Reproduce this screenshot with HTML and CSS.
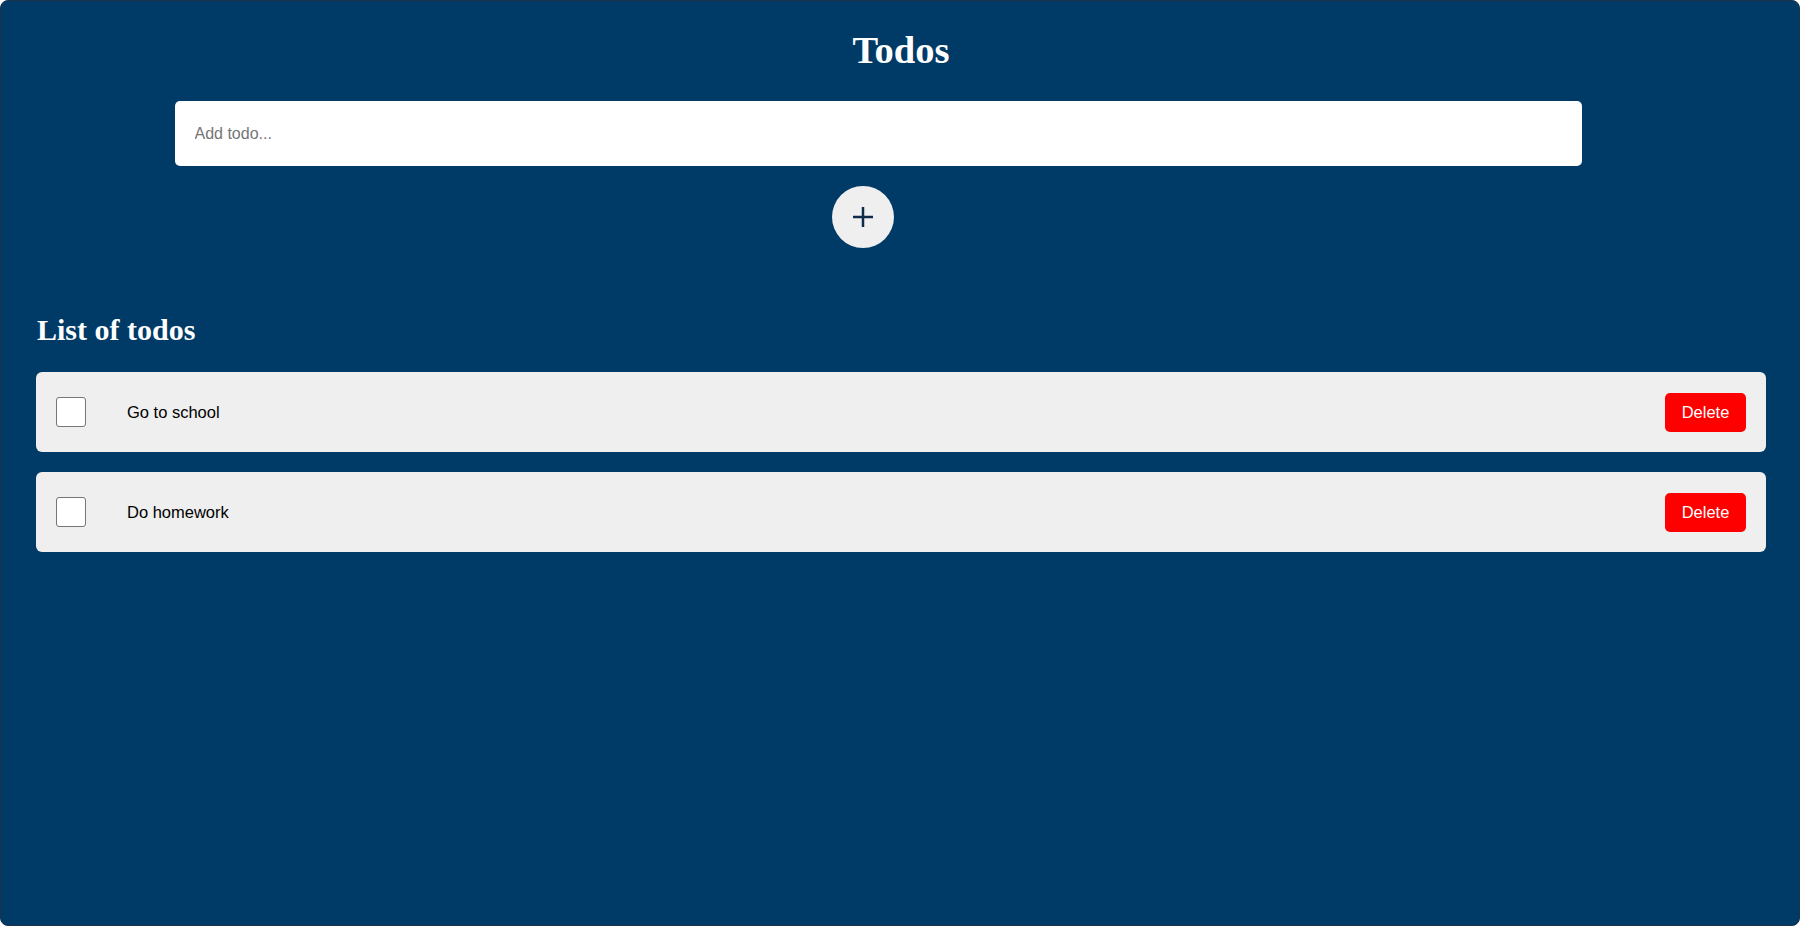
FILE: index.html
```html
<!DOCTYPE html>
<html lang="en">
<head>
<meta charset="utf-8">
<title>Todos</title>
<link rel="stylesheet" href="styles.css">
</head>
<body>
<div class="app">
  <h1 class="title">Todos</h1>
  <form class="add-form">
    <input class="add-input" type="text" placeholder="Add todo...">
    <button class="add-btn" type="button" aria-label="Add">
      <svg width="22" height="22" viewBox="0 0 22 22"><path d="M11 1v20M1 11h20" stroke="#0d2b4b" stroke-width="2.5" fill="none"/></svg>
    </button>
  </form>
  <h2 class="list-title">List of todos</h2>
  <ul class="todo-list">
    <li class="todo">
      <input class="todo-check" type="checkbox">
      <span class="todo-text">Go to school</span>
      <button class="todo-delete" type="button">Delete</button>
    </li>
    <li class="todo">
      <input class="todo-check" type="checkbox">
      <span class="todo-text">Do homework</span>
      <button class="todo-delete" type="button">Delete</button>
    </li>
  </ul>
</div>
</body>
</html>
```
FILE: styles.css
```css
html, body {
  margin: 0;
  padding: 0;
  background: #ffffff;
}
.app {
  box-sizing: border-box;
  height: 926px;
  background: #003a66;
  border: 1px solid #1d3149;
  border-radius: 8px;
  padding: 27px 33px 0 35px;
  font-family: "Liberation Sans", Arial, sans-serif;
}
.title {
  margin: 0;
  text-align: center;
  color: #ffffff;
  font-family: "Liberation Serif", "Times New Roman", serif;
  font-weight: bold;
  font-size: 38.5px;
  line-height: normal;
}
.add-form {
  display: flex;
  flex-direction: column;
  align-items: center;
  margin: 29px 0 0;
}
.add-input {
  box-sizing: border-box;
  width: 1407px;
  height: 65px;
  margin-right: 46px;
  border: none;
  border-radius: 5px;
  padding: 0 20px;
  background: #ffffff;
  font-family: "Liberation Sans", Arial, sans-serif;
  font-size: 16px;
  color: #222;
  outline: none;
}
.add-input::placeholder {
  color: #757575;
}
.add-btn {
  box-sizing: border-box;
  width: 62px;
  height: 62px;
  margin: 20px 76px 0 0;
  padding: 0;
  border: none;
  border-radius: 50%;
  background: #efefef;
  display: flex;
  align-items: center;
  justify-content: center;
}
.list-title {
  margin: 65px 0 0 1px;
  color: #ffffff;
  font-family: "Liberation Serif", "Times New Roman", serif;
  font-weight: bold;
  font-size: 30px;
  line-height: normal;
}
.todo-list {
  list-style: none;
  margin: 25px 0 0;
  padding: 0;
  display: flex;
  flex-direction: column;
  gap: 20px;
}
.todo {
  box-sizing: border-box;
  height: 80px;
  background: #efefef;
  border-radius: 6px;
  padding: 0 20px;
  display: flex;
  align-items: center;
}
.todo-check {
  appearance: none;
  -webkit-appearance: none;
  box-sizing: border-box;
  width: 30px;
  height: 30px;
  margin: 0 41px 0 0;
  background: #ffffff;
  border: 1px solid #767676;
  border-radius: 3px;
  flex: none;
}
.todo-text {
  flex: 1;
  font-size: 16.5px;
  color: #000000;
}
.todo-delete {
  box-sizing: border-box;
  width: 81px;
  height: 39px;
  border: none;
  border-radius: 5px;
  background: #ff0000;
  color: #ffffff;
  font-family: "Liberation Sans", Arial, sans-serif;
  font-size: 16.5px;
  padding: 0;
}
```
